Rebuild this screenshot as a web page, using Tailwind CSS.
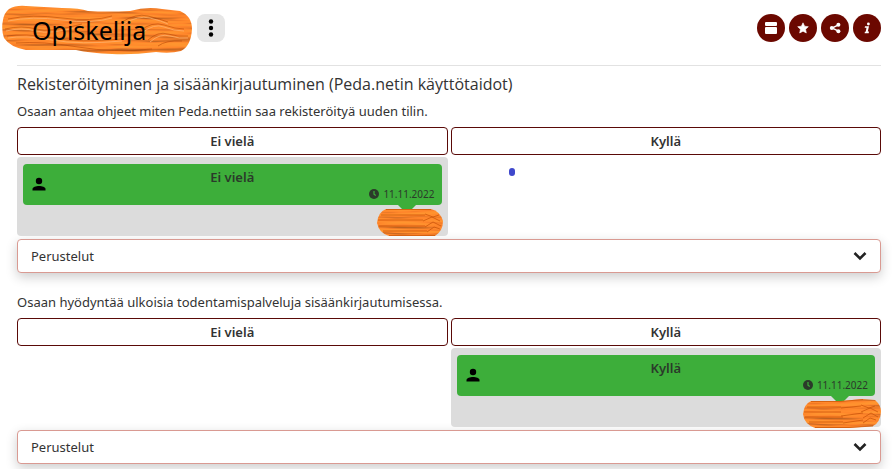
<!DOCTYPE html>
<html lang="fi">
<head>
  <meta charset="UTF-8" />
  <meta name="viewport" content="width=device-width, initial-scale=1" />
  <title>Opiskelija</title>
  <script src="https://cdn.jsdelivr.net/npm/@tailwindcss/browser@4"></script>
</head>
<body class="bg-white pl-[17px] pr-3 font-['Noto_Sans','Open_Sans',sans-serif] text-[13px] leading-[18px] text-[#333]">

  <!-- Shared drawings -->
  <svg class="absolute size-0" aria-hidden="true">
    <filter id="paint" x="0" y="0" width="100%" height="100%" color-interpolation-filters="sRGB">
      <feTurbulence type="fractalNoise" baseFrequency="0.014 0.22" numOctaves="3" seed="4" result="noise" />
      <feDiffuseLighting in="noise" surfaceScale="1.2" diffuseConstant="1.15" lighting-color="#ff842a" result="lit">
        <feDistantLight azimuth="270" elevation="62" />
      </feDiffuseLighting>
      <feComposite in="lit" in2="SourceAlpha" operator="in" />
    </filter>
    <symbol id="person" viewBox="0 0 14 14">
      <circle cx="7" cy="4" r="3.2" />
      <path d="M.5 13.500v-1.600C.5 9.900 4 8.900 7 8.900s6.500 1 6.500 3v1.600z" />
    </symbol>
    <symbol id="clock" viewBox="0 0 10 10">
      <circle cx="5" cy="5" r="5" fill="#2b3a2a" />
      <path d="M5 2v3.200l1.700 1.300" fill="none" stroke="#3dae3a" stroke-width="1.200" />
    </symbol>
    <symbol id="chevron" viewBox="0 0 14 10">
      <path d="M1.500 2 7 7.500 12.500 2" fill="none" stroke="#222" stroke-width="2.600" />
    </symbol>
  </svg>

  <header class="flex h-[66px] items-start justify-between border-b border-[#e2e2e2]">
    <div class="flex items-start">
      <h1 class="relative -ml-[15px] mt-[5px] h-[50px] w-[190px] pl-[30px] text-[25px] leading-[50px] text-black">
        <svg class="absolute inset-0 size-full" viewBox="0 0 190 50" aria-hidden="true">
          <path filter="url(#paint)" fill="#f80" d="M7 4Q14 0 24 1L60 3Q78 3 86 6Q105 7 128 6Q145 1 160 4L178 6Q190 11 190 24Q189 41 179 46Q168 49 154 47Q130 50 110 49Q88 48 74 45H24Q8 42 2 33Q-1 24 1 15Q2 8 7 4Z" />
          <path fill="none" stroke="#b94a08" stroke-width="1" stroke-opacity=".6" d="M6 14Q30 9 60 13T110 11M3 24Q20 20 34 24T80 19M5 31Q22 28 50 33T120 34M14 38Q40 36 76 42T150 44M120 17q14-9 26-6t20 6M138 26q12-10 24-6t20 4M146 35q10-9 20-6t20 2M156 41q8-6 24-5" />
          <path fill="none" stroke="#ffb26b" stroke-width="1" stroke-opacity=".8" d="M6 16Q30 11 60 15T110 13M4 26Q20 22 34 26T80 21M6 33Q22 30 50 35T120 36M122 19q14-9 26-6t18 6M140 28q12-10 22-6t20 4M148 37q10-9 20-6t18 2" />
        </svg>
        <span class="relative">Opiskelija</span>
      </h1>
      <button type="button" aria-label="Valikko" class="ml-[5px] mt-[14px] flex h-7 w-7 items-center justify-center rounded-lg bg-[#e6e6e6]">
        <svg class="h-5 w-5" viewBox="0 0 20 20" aria-hidden="true">
          <circle cx="10" cy="3.500" r="2.200" />
          <circle cx="10" cy="10" r="2.200" />
          <circle cx="10" cy="16.500" r="2.200" />
        </svg>
      </button>
    </div>
    <nav class="mt-[14px] flex gap-1">
      <button type="button" aria-label="Näkymä" class="flex h-7 w-7 items-center justify-center rounded-full bg-[#6b0800]">
        <svg class="size-3" viewBox="0 0 12 12" fill="#fff" aria-hidden="true">
          <rect y="0" width="12" height="4" rx="1" />
          <rect y="5" width="12" height="7" rx="1" />
        </svg>
      </button>
      <button type="button" aria-label="Suosikki" class="flex h-7 w-7 items-center justify-center rounded-full bg-[#6b0800]">
        <svg class="size-3" viewBox="0 0 12 12" fill="#fff" aria-hidden="true">
          <path stroke="#fff" stroke-width=".6" stroke-linejoin="round" d="M6 .8l1.600 3.400 3.700.5-2.700 2.600.7 3.700L6 9.200 2.700 11l.7-3.700L.7 4.700l3.700-.5z" />
        </svg>
      </button>
      <button type="button" aria-label="Jaa" class="flex h-7 w-7 items-center justify-center rounded-full bg-[#6b0800]">
        <svg class="size-3" viewBox="0 0 12 12" fill="#fff" aria-hidden="true">
          <path d="M9.500 2.800 3 6 9.500 9.200" fill="none" stroke="#fff" stroke-width="1.400" />
          <circle cx="9.400" cy="2.800" r="2" />
          <circle cx="2.800" cy="6" r="2" />
          <circle cx="9.400" cy="9.200" r="2" />
        </svg>
      </button>
      <button type="button" aria-label="Tiedot" class="flex h-7 w-7 items-center justify-center rounded-full bg-[#6b0800]">
        <svg class="size-3" viewBox="0 0 12 12" fill="#fff" aria-hidden="true">
          <circle cx="7.400" cy="2" r="1.400" />
          <path d="M4 4.300h4L6.800 9.400h1.200l-.3 1.800H3.600l.3-1.400h.8L5.500 5.800H3.700z" />
        </svg>
      </button>
    </nav>
  </header>

  <main>
    <h2 class="font-['Open_Sans',sans-serif] text-[16px] leading-9">Rekisteröityminen ja sisäänkirjautuminen (Peda.netin käyttötaidot)</h2>

    <section>
      <p>Osaan antaa ohjeet miten Peda.nettiin saa rekisteröityä uuden tilin.</p>
      <div class="mt-[7px] grid grid-cols-2 gap-x-[3px] gap-y-[2px]">
        <button type="button" class="h-7 rounded border border-[#5a0a08] font-semibold">Ei vielä</button>
        <button type="button" class="h-7 rounded border border-[#5a0a08] font-semibold">Kyllä</button>
        <div class="h-[79px] rounded bg-[#dcdcdc] px-[6px] pt-[7px]">
          <div class="relative h-[41px] rounded bg-[#3dae3a] pt-1 text-center">
            <svg class="absolute left-[9px] top-[13px] size-[14px]" aria-hidden="true"><use href="#person" /></svg>
            <p class="font-semibold text-[#2b3a2a]">Ei vielä</p>
            <p class="flex items-center justify-end gap-1 pr-[7px] text-[10px] leading-4 text-[#2b3a2a]">
              <svg class="size-[10px]" aria-hidden="true"><use href="#clock" /></svg>
              11.11.2022
            </p>
            <svg class="absolute right-[26px] top-full h-[6px] w-[18px]" viewBox="0 0 18 6" aria-hidden="true"><path d="M0 0h18l-6 6H6z" fill="#3dae3a" /></svg>
            <svg class="absolute -right-px top-[44px] h-[29px] w-[66px]" viewBox="0 0 66 29" aria-hidden="true">
              <path filter="url(#paint)" fill="#f80" d="M9 1H54Q63 3 66 13Q66 23 58 28H12Q2 25 0 15Q1 4 9 1Z" />
              <path fill="none" stroke="#c95408" stroke-width="1" stroke-opacity=".75" d="M9 1.500H54M4 7H48M1 12H46M2 18H48M6 23H50M12 27.500H58M48 6l8 3 6-2M46 13l9-4 8 4M48 19l8-5 8 4M50 24l7-5 6 2" />
            </svg>
          </div>
        </div>
        <div class="pl-[58px] pt-[11px]">
          <svg class="h-2 w-[6px]" viewBox="0 0 6 8" aria-hidden="true"><rect width="6" height="8" rx="3" fill="#3f48cc" /></svg>
        </div>
      </div>
      <details class="mt-[3px] rounded border border-[#d99a92] bg-white shadow-[0_4px_12px_rgba(0,0,0,0.2)]">
        <summary class="flex h-8 cursor-pointer list-none items-center justify-between px-[13px]">
          Perustelut
          <svg class="h-[10px] w-[14px]" aria-hidden="true"><use href="#chevron" /></svg>
        </summary>
      </details>
    </section>

    <section class="mt-5 pb-[5px]">
      <p>Osaan hyödyntää ulkoisia todentamispalveluja sisäänkirjautumisessa.</p>
      <div class="mt-[7px] grid grid-cols-2 gap-x-[3px] gap-y-[2px]">
        <button type="button" class="h-7 rounded border border-[#5a0a08] font-semibold">Ei vielä</button>
        <button type="button" class="h-7 rounded border border-[#5a0a08] font-semibold">Kyllä</button>
        <div class="col-start-2 h-[79px] rounded bg-[#dcdcdc] px-[6px] pt-[7px]">
          <div class="relative h-[41px] rounded bg-[#3dae3a] pt-1 text-center">
            <svg class="absolute left-[9px] top-[13px] size-[14px]" aria-hidden="true"><use href="#person" /></svg>
            <p class="font-semibold text-[#2b3a2a]">Kyllä</p>
            <p class="flex items-center justify-end gap-1 pr-[7px] text-[10px] leading-4 text-[#2b3a2a]">
              <svg class="size-[10px]" aria-hidden="true"><use href="#clock" /></svg>
              11.11.2022
            </p>
            <svg class="absolute right-[26px] top-full h-[6px] w-[18px]" viewBox="0 0 18 6" aria-hidden="true"><path d="M0 0h18l-6 6H6z" fill="#3dae3a" /></svg>
            <svg class="absolute -right-[6px] top-[44px] h-[29px] w-[78px]" viewBox="0 0 78 29" aria-hidden="true">
              <path filter="url(#paint)" fill="#f80" d="M8 2L38 2L60 0L72 1Q78 6 78 13Q77 24 70 27L46 29H12Q1 25 0 15Q1 5 8 2Z" />
              <path fill="none" stroke="#c95408" stroke-width="1" stroke-opacity=".75" d="M8 2.500H38L60 .5M4 8H38M1 13H38M2 18H40M6 23H40M12 28.500H46L70 27M38 9l20-2M38 17l22-3M40 24l20-3M58 6l8 3 6-2M58 13l9-4 8 4M60 19l8-5 7 4M60 24l7-5 6 2" />
            </svg>
          </div>
        </div>
      </div>
      <details class="mt-[3px] rounded border border-[#d99a92] bg-white shadow-[0_4px_12px_rgba(0,0,0,0.2)]">
        <summary class="flex h-8 cursor-pointer list-none items-center justify-between px-[13px]">
          Perustelut
          <svg class="h-[10px] w-[14px]" aria-hidden="true"><use href="#chevron" /></svg>
        </summary>
      </details>
    </section>
  </main>
</body>
</html>
